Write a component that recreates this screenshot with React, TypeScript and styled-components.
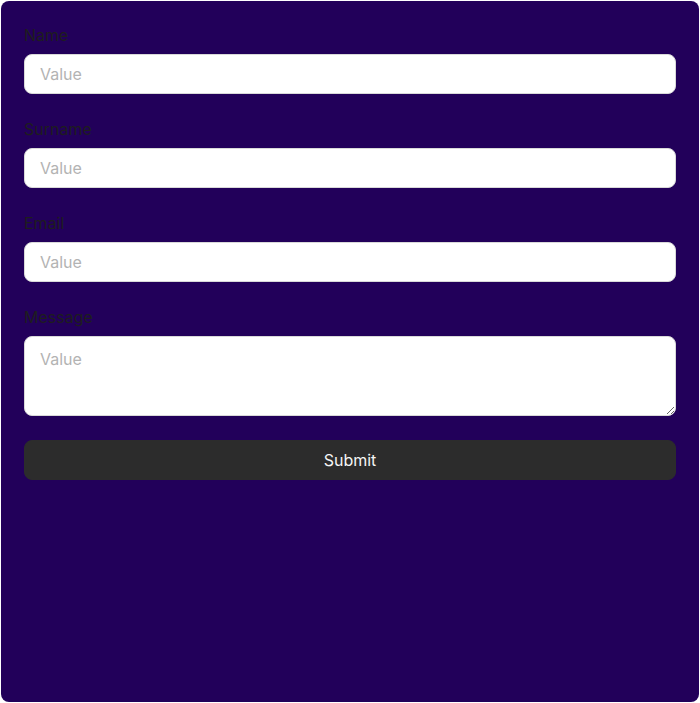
import React from "react";
import styled, { createGlobalStyle } from "styled-components";

const Global = createGlobalStyle`
  html, body { margin: 0; padding: 0; background: #ffffff; }
  body { font-family: Inter, "Noto Sans", sans-serif; }
  * { box-sizing: border-box; }
`;

const Page = styled.div`
  padding: 1px;
  height: 703px;
`;

const Panel = styled.form`
  height: 701px;
  background: #22005a;
  border-radius: 8px;
  padding: 23px;
  display: flex;
  flex-direction: column;
  gap: 24px;
`;

const Field = styled.label`
  display: flex;
  flex-direction: column;
  gap: 8px;
`;

const Label = styled.span`
  font-size: 16px;
  line-height: 22px;
  color: #1e1e1e;
`;

const inputStyles = `
  width: 100%;
  border: 1px solid #d9d9d9;
  border-radius: 8px;
  background: #ffffff;
  font-family: Inter, "Noto Sans", sans-serif;
  font-size: 16px;
  line-height: 16px;
  color: #1e1e1e;
  padding: 12px 16px 12px 15px;
  outline: none;
  &::placeholder { color: #b3b3b3; }
`;

const Input = styled.input`
  ${inputStyles}
  height: 40px;
`;

const TextArea = styled.textarea`
  ${inputStyles}
  height: 80px;
  resize: vertical;
  line-height: 22px;
  padding-top: 11px;
`;

const Button = styled.button`
  height: 40px;
  border: 1px solid #2c2c2c;
  border-radius: 8px;
  background: #2c2c2c;
  color: #f5f5f5;
  font-family: Inter, "Noto Sans", sans-serif;
  font-size: 16px;
  cursor: pointer;
`;

export default function App() {
  return (
    <Page>
      <Global />
      <Panel onSubmit={(e) => e.preventDefault()}>
        <Field>
          <Label>Name</Label>
          <Input placeholder="Value" />
        </Field>
        <Field>
          <Label>Surname</Label>
          <Input placeholder="Value" />
        </Field>
        <Field>
          <Label>Email</Label>
          <Input placeholder="Value" />
        </Field>
        <Field>
          <Label>Message</Label>
          <TextArea placeholder="Value" />
        </Field>
        <Button type="submit">Submit</Button>
      </Panel>
    </Page>
  );
}
